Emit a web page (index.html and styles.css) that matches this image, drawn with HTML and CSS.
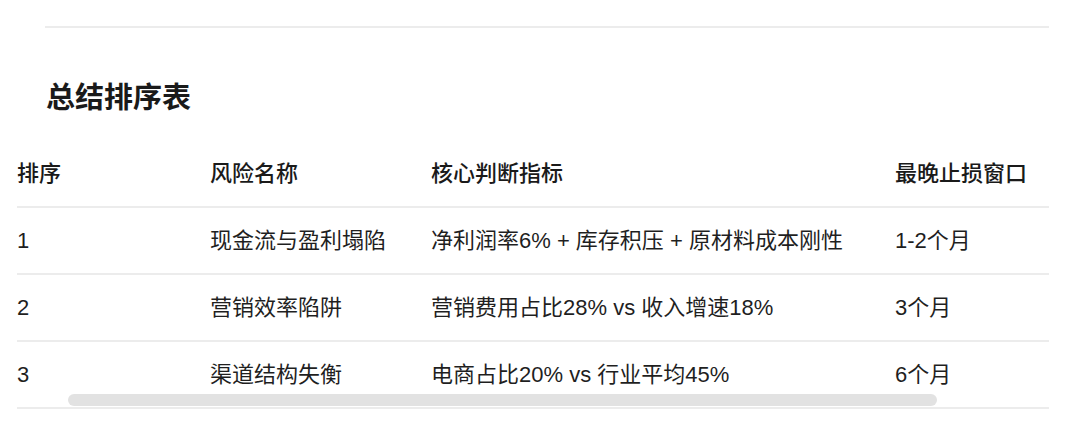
FILE: index.html
```html
<!DOCTYPE html>
<html lang="zh-CN">
<head>
<meta charset="utf-8">
<title>总结排序表</title>
<link rel="stylesheet" href="styles.css">
</head>
<body>
<div class="page">
  <div class="divider"></div>
  <h2 class="title">总结排序表</h2>
  <div class="table-wrap">
    <table class="rank-table">
      <colgroup>
        <col class="c1"><col class="c2"><col class="c3"><col class="c4">
      </colgroup>
      <thead>
        <tr><th>排序</th><th>风险名称</th><th>核心判断指标</th><th>最晚止损窗口</th></tr>
      </thead>
      <tbody>
        <tr><td>1</td><td>现金流与盈利塌陷</td><td>净利润率6% + 库存积压 + 原材料成本刚性</td><td>1-2个月</td></tr>
        <tr><td>2</td><td>营销效率陷阱</td><td>营销费用占比28% vs 收入增速18%</td><td>3个月</td></tr>
        <tr><td>3</td><td>渠道结构失衡</td><td>电商占比20% vs 行业平均45%</td><td>6个月</td></tr>
      </tbody>
    </table>
    <div class="scroll-thumb"></div>
  </div>
</div>
</body>
</html>
```

FILE: styles.css
```css
html, body {
  margin: 0;
  padding: 0;
  background: #ffffff;
}

body {
  font-family: "Liberation Sans", "Noto Sans CJK SC", sans-serif;
  color: #1c1c1e;
}

.page {
  width: 1080px;
}

.divider {
  margin: 26px 31px 0 45px;
  height: 2px;
  background: #ececec;
}

.title {
  margin: 50px 0 0 46px;
  font-size: 29px;
  line-height: 40px;
  font-weight: 700;
  color: #1a1a1a;
}

.table-wrap {
  position: relative;
  margin: 23px 0 0 17px;
  width: 1032px;
}

.rank-table {
  width: 1032px;
  table-layout: fixed;
  border-collapse: collapse;
  font-size: 22px;
}

.c1 { width: 193px; }
.c2 { width: 221px; }
.c3 { width: 464px; }
.c4 { width: 154px; }

.rank-table th,
.rank-table td {
  height: 65px;
  padding: 0;
  text-align: left;
  vertical-align: middle;
  line-height: 30px;
  border-bottom: 2px solid #ececec;
  white-space: nowrap;
}

.rank-table th {
  font-weight: 500;
  color: #1a1a1a;
}

.rank-table td {
  font-weight: 400;
  color: #1f1f1f;
}

.scroll-thumb {
  position: absolute;
  left: 51px;
  bottom: 3px;
  width: 869px;
  height: 12px;
  border-radius: 6px;
  background: #e2e2e2;
}
```
